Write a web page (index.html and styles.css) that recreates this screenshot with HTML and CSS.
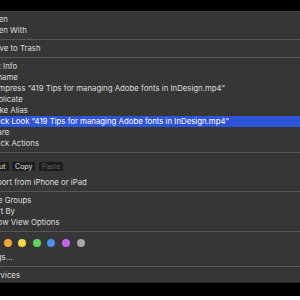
FILE: index.html
```html
<!DOCTYPE html>
<html>
<head>
<meta charset="utf-8">
<link rel="stylesheet" href="styles.css">
</head>
<body>
<div class="screen">
  <div class="menu">
    <div class="item">Open</div>
    <div class="item">Open With</div>
    <div class="sep"></div>
    <div class="item">Move to Trash</div>
    <div class="sep"></div>
    <div class="item">Get Info</div>
    <div class="item">Rename</div>
    <div class="item">Compress “419 Tips for managing Adobe fonts in InDesign.mp4”</div>
    <div class="item">Duplicate</div>
    <div class="item">Make Alias</div>
    <div class="item active">Quick Look “419 Tips for managing Adobe fonts in InDesign.mp4”</div>
    <div class="item">Share</div>
    <div class="item">Quick Actions</div>
    <div class="sep"></div>
    <div class="buttons">
      <span class="btn">Cut</span>
      <span class="btn">Copy</span>
      <span class="btn disabled">Paste</span>
    </div>
    <div class="item">Import from iPhone or iPad</div>
    <div class="sep"></div>
    <div class="item">Use Groups</div>
    <div class="item">Sort By</div>
    <div class="item">Show View Options</div>
    <div class="sep"></div>
    <div class="tags">
      <span class="dot red"></span>
      <span class="dot orange"></span>
      <span class="dot yellow"></span>
      <span class="dot green"></span>
      <span class="dot blue"></span>
      <span class="dot purple"></span>
      <span class="dot grey"></span>
    </div>
    <div class="item">Tags...</div>
    <div class="sep"></div>
    <div class="item">Services</div>
  </div>
</div>
</body>
</html>
```
FILE: styles.css
```css
html, body {
  margin: 0;
  padding: 0;
  background: #ffffff;
  width: 300px;
  height: 300px;
  overflow: hidden;
}
.screen {
  background: #000000;
  padding: 11px 0 13px 0;
}
.menu {
  margin-left: -14px;
  width: 330px;
  background: #363636;
  border-top: 1px solid #444444;
  border-bottom: 1px solid #262626;
  padding: 2px 0 1px 0;
  display: flex;
  flex-direction: column;
  font-family: Inter, "Noto Sans", sans-serif;
  font-size: 7.8px;
  color: #dcdcdc;
}
.item {
  height: 11px;
  line-height: 11px;
  padding-left: 2px;
  white-space: nowrap;
}
.item.active {
  background: #2e55d8;
  color: #ffffff;
}
.sep {
  height: 7px;
  box-sizing: border-box;
  padding-top: 3px;
}
.sep::before {
  content: "";
  display: block;
  height: 1px;
  background: #575757;
}
.buttons {
  display: flex;
  gap: 3.5px;
  padding: 6px 0 6px 5px;
}
.btn {
  height: 9px;
  line-height: 9px;
  padding: 0 3px;
  background: #1e1e1e;
  border-radius: 1px;
  color: #e0e0e0;
  font-size: 7px;
}
.btn.disabled {
  color: #5e5e5e;
}
.tags {
  display: flex;
  gap: 6.6px;
  padding: 3.5px 0 5.5px 3px;
}
.dot {
  width: 8px;
  height: 8px;
  border-radius: 50%;
}
.red { background: #f2564d; }
.orange { background: #f5a33a; }
.yellow { background: #f4d84a; }
.green { background: #62d35b; }
.blue { background: #4b8ff2; }
.purple { background: #c463e6; }
.grey { background: #a6a6a6; }
```
